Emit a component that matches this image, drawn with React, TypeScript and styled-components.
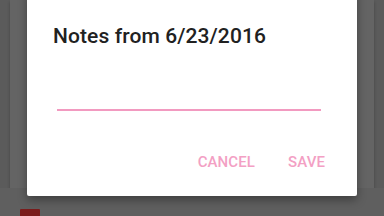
import * as React from 'react'
import styled, { createGlobalStyle } from 'styled-components'

const Global = createGlobalStyle`
  html, body {
    margin: 0;
    padding: 0;
    width: 384px;
    height: 216px;
    overflow: hidden;
    background: #5d5d5d;
    font-family: Roboto, 'Noto Sans', sans-serif;
  }
`

const Screen = styled.div`
  position: relative;
  width: 384px;
  height: 216px;
  overflow: hidden;
  background: #5b5b5b;
`

const BackCard = styled.div`
  margin: 0 10px;
  height: 188px;
  background: #646464;
  box-shadow: 0 2px 3px rgba(0, 0, 0, 0.25);
`

const ListRow = styled.div`
  display: flex;
  align-items: flex-start;
  padding: 21px 0 0 20px;
  height: 28px;
  background: #5f5f5f;
`

const RedTile = styled.div`
  width: 20px;
  height: 20px;
  background: #7a1c1c;
  border-radius: 1px;
`

const Dialog = styled.div`
  position: absolute;
  left: 27px;
  top: -10px;
  width: 330px;
  height: 206px;
  background: #ffffff;
  border-radius: 2px;
  box-shadow: 0 4px 10px rgba(0, 0, 0, 0.35);
  display: flex;
  flex-direction: column;
  box-sizing: border-box;
  padding: 33px 32px 0 26px;
`

const Title = styled.h2`
  margin: 0;
  font-size: 21px;
  line-height: 26px;
  font-weight: 500;
  color: #212121;
  letter-spacing: 0.1px;
`

const Field = styled.div`
  margin: 60px 4px 0 4px;
  height: 2px;
  background: #f29ac0;
`

const Actions = styled.div`
  display: flex;
  justify-content: flex-end;
  gap: 33px;
  margin-top: 42px;
`

const ActionButton = styled.button`
  border: none;
  background: none;
  padding: 0;
  font-family: Roboto, sans-serif;
  font-size: 15px;
  font-weight: 500;
  color: #f3a0c4;
  letter-spacing: 0.1px;
`

export default function App() {
  return (
    <>
      <Global />
      <Screen>
        <BackCard />
        <ListRow>
          <RedTile />
        </ListRow>
        <Dialog>
          <Title>Notes from 6/23/2016</Title>
          <Field />
          <Actions>
            <ActionButton>CANCEL</ActionButton>
            <ActionButton>SAVE</ActionButton>
          </Actions>
        </Dialog>
      </Screen>
    </>
  )
}
